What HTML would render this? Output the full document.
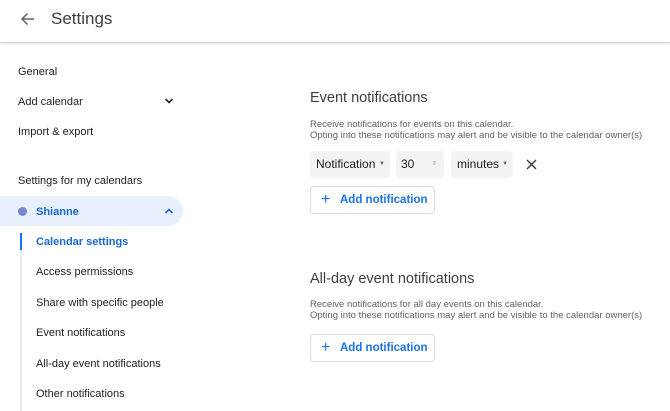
<!DOCTYPE html><html><head><style>
body{margin:0;width:670px;height:411px;overflow:hidden;background:#fff;font-family:"Liberation Sans",sans-serif;color:#3c4043;position:relative}
.a{position:absolute;white-space:nowrap}
.s{font-size:11px;color:#202124}
.box{position:absolute;background:#f1f3f4;border-radius:4px;font-size:12px;color:#202124;line-height:27px}
.btn{position:absolute;border:1px solid #dadce0;border-radius:4px;color:#1a73e8;font-size:11.5px;font-weight:bold;line-height:26px}
.d{font-size:9.5px;color:#5f6368;line-height:11px}
.ar{position:absolute;font-size:6px;color:#5f6368;line-height:27px}
</style></head><body>
<div style="position:absolute;left:0;top:0;width:670px;height:42px;border-bottom:1px solid #dadce0;box-shadow:0 1px 2px rgba(0,0,0,.12)"></div>
<svg class="a" style="left:20px;top:11px" width="16" height="16" viewBox="0 0 16 16"><path d="M14 8H2M7.5 2.5L2 8l5.5 5.5" stroke="#5f6368" stroke-width="1.5" fill="none"/></svg>
<div class="a" style="left:51px;top:9px;font-size:17px;color:#3c4043">Settings</div>
<div class="a s" style="left:18px;top:66px">General</div>
<div class="a s" style="left:18px;top:96px">Add calendar</div>
<svg class="a" style="left:164px;top:97px" width="10" height="8"><path d="M1.5 2l3.5 3.5L8.5 2" stroke="#202124" stroke-width="1.6" fill="none"/></svg>
<div class="a s" style="left:18px;top:126px">Import &amp; export</div>
<div class="a s" style="left:18px;top:175px;font-weight:500">Settings for my calendars</div>
<div style="position:absolute;left:0;top:196px;width:183px;height:30px;background:#e8f0fe;border-radius:0 15px 15px 0"></div>
<div style="position:absolute;left:18px;top:207px;width:9px;height:9px;border-radius:50%;background:#7986cb"></div>
<div class="a" style="left:36px;top:206px;font-size:11px;color:#1967d2;font-weight:bold">Shianne</div>
<svg class="a" style="left:164px;top:207px" width="10" height="8"><path d="M1.5 6l3.5-3.5L8.5 6" stroke="#1967d2" stroke-width="1.6" fill="none"/></svg>
<div style="position:absolute;left:20px;top:233px;width:2px;height:178px;background:#e8eaed"></div>
<div style="position:absolute;left:20px;top:233px;width:2px;height:17px;background:#1a73e8"></div>
<div class="a" style="left:36px;top:236px;font-size:11px;color:#1967d2;font-weight:bold">Calendar settings</div>
<div class="a s" style="left:36px;top:266px">Access permissions</div>
<div class="a s" style="left:36px;top:297px">Share with specific people</div>
<div class="a s" style="left:36px;top:327px">Event notifications</div>
<div class="a s" style="left:36px;top:358px">All-day event notifications</div>
<div class="a s" style="left:36px;top:388px">Other notifications</div>

<div class="a" style="left:310px;top:90px;font-size:14.5px;color:#3c4043">Event notifications</div>
<div class="a d" style="left:310px;top:119px">Receive notifications for events on this calendar.<br>Opting into these notifications may alert and be visible to the calendar owner(s)</div>
<div class="box" style="left:310px;top:151px;width:80px;height:27px"><span style="margin-left:6px">Notification</span><span class="ar" style="left:69px">▼</span></div>
<div class="box" style="left:396px;top:151px;width:48px;height:27px"><span style="margin-left:5px">30</span><span class="ar" style="left:36px;color:#aaa">⇕</span></div>
<div class="box" style="left:451px;top:151px;width:62px;height:27px"><span style="margin-left:6px">minutes</span><span class="ar" style="left:51px">▼</span></div>
<svg class="a" style="left:526px;top:159px" width="11" height="11"><path d="M1 1l9 9M10 1l-9 9" stroke="#3c4043" stroke-width="1.5"/></svg>
<div class="btn" style="left:310px;top:186px;width:123px;height:26px"><span style="position:absolute;left:10px;font-size:16px;font-weight:normal">+</span><span style="position:absolute;left:29px">Add notification</span></div>

<div class="a" style="left:310px;top:271px;font-size:14.5px;color:#3c4043">All-day event notifications</div>
<div class="a d" style="left:310px;top:299px">Receive notifications for all day events on this calendar.<br>Opting into these notifications may alert and be visible to the calendar owner(s)</div>
<div class="btn" style="left:310px;top:334px;width:123px;height:26px"><span style="position:absolute;left:10px;font-size:16px;font-weight:normal">+</span><span style="position:absolute;left:29px">Add notification</span></div>
</body></html>
